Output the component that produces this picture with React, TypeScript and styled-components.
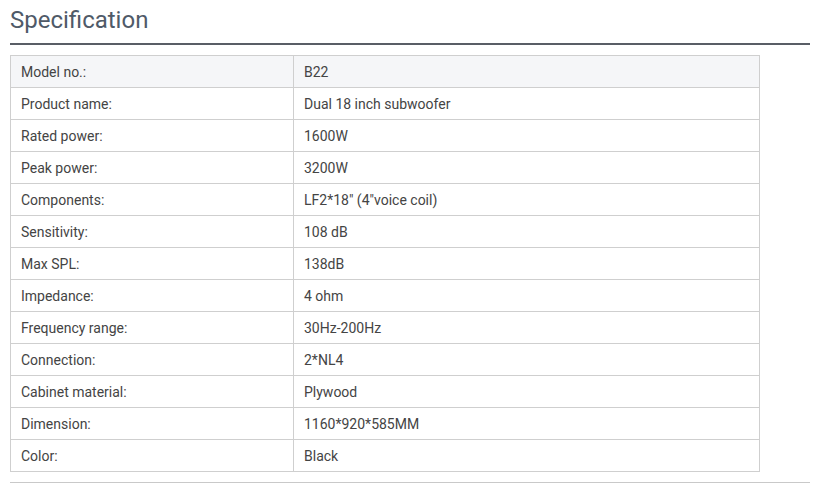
import React from 'react';
import styled, { createGlobalStyle } from 'styled-components';

const GlobalStyle = createGlobalStyle`
  body {
    margin: 0;
    background: #fff;
    font-family: Roboto, "Liberation Sans", sans-serif;
  }
`;

interface SpecRow {
  label: string,
  value: string
}

const specs: SpecRow[] = [
  { label: 'Model no.:', value: 'B22' },
  { label: 'Product name:', value: 'Dual 18 inch subwoofer' },
  { label: 'Rated power:', value: '1600W' },
  { label: 'Peak power:', value: '3200W' },
  { label: 'Components:', value: 'LF2*18" (4"voice coil)' },
  { label: 'Sensitivity:', value: '108 dB' },
  { label: 'Max SPL:', value: '138dB' },
  { label: 'Impedance:', value: '4 ohm' },
  { label: 'Frequency range:', value: '30Hz-200Hz' },
  { label: 'Connection:', value: '2*NL4' },
  { label: 'Cabinet material:', value: 'Plywood' },
  { label: 'Dimension:', value: '1160*920*585MM' },
  { label: 'Color:', value: 'Black' },
];

const Section = styled.section`
  width: 800px;
  margin-left: 10px;
`;

const Title = styled.h2`
  margin: 0;
  padding-top: 6px;
  font-size: 24px;
  line-height: 28px;
  font-weight: 400;
  color: #4f5a68;
  padding-bottom: 9px;
  border-bottom: 2px solid #595e66;
`;

const SpecTable = styled.table`
  width: 750px;
  margin-top: 10px;
  border-collapse: collapse;
  table-layout: fixed;
  font-size: 14px;
  color: #444;
`;

const Row = styled.tr<{ $first?: boolean }>`
  background: ${({ $first }) => ($first ? '#f5f6f8' : '#fff')};
`;

const Cell = styled.td<{ $label?: boolean }>`
  height: 32px;
  padding: 0 10px;
  border: 1px solid #cfcfcf;
  width: ${({ $label }) => ($label ? '283px' : 'auto')};
  box-sizing: border-box;
  vertical-align: middle;
`;

const BottomRule = styled.div`
  margin-top: 10px;
  height: 1px;
  background: #c9c9c9;
`;

export default function App() {
  return (
    <>
      <GlobalStyle />
      <Section>
        <Title>Specification</Title>
        <SpecTable>
          <tbody>
            {specs.map((s, i) => (
              <Row key={s.label} $first={i === 0}>
                <Cell $label>{s.label}</Cell>
                <Cell>{s.value}</Cell>
              </Row>
            ))}
          </tbody>
        </SpecTable>
        <BottomRule />
      </Section>
    </>
  );
}
